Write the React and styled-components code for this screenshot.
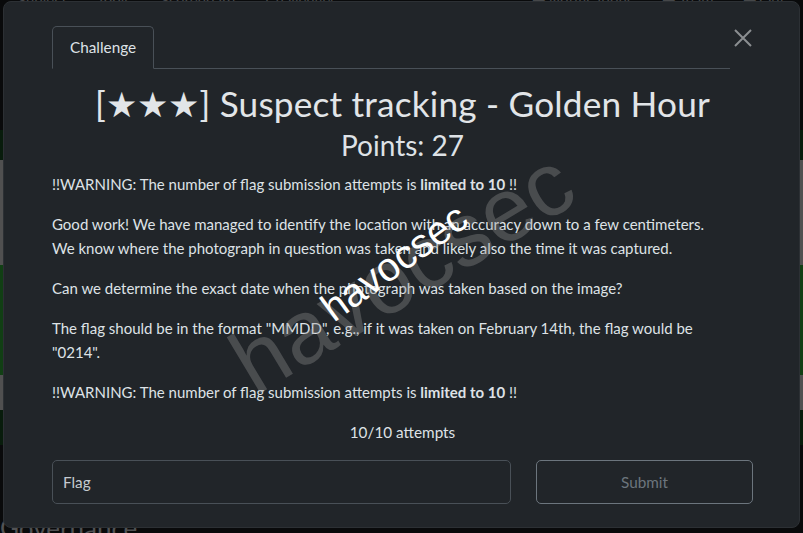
import React from 'react'
import styled, { createGlobalStyle } from 'styled-components'

const GlobalStyle = createGlobalStyle`
  html, body {
    margin: 0;
    padding: 0;
    background: #0b0c0d;
    font-family: Lato, "Open Sans", sans-serif;
    overflow: hidden;
  }
`

const Page = styled.div`
  position: relative;
  width: 803px;
  height: 533px;
  overflow: hidden;
  display: flex;
  flex-direction: column;
  background: #0f1011;
`

const Nav = styled.div`
  height: 4px;
  overflow: hidden;
  display: flex;
  align-items: flex-end;
  justify-content: space-between;
  padding: 0 18px;
  color: #6a6d70;
  font-size: 15px;
`

const NavGroup = styled.div`
  display: flex;
  gap: 30px;
  line-height: 10px;
  height: 10px;
  margin-bottom: -1px;
`

const Band = styled.div`
  height: ${(p) => p.h}px;
  background: ${(p) => p.bg};
`

const Heading = styled.div`
  margin-top: auto;
  height: 16px;
  font-size: 26px;
  line-height: 22px;
  color: #7d7f82;
`

const Backdrop = styled.div`
  position: absolute;
  inset: 0;
  background: rgba(0, 0, 0, 0.35);
`

const Modal = styled.div`
  position: absolute;
  left: 3px;
  top: 1px;
  width: 797px;
  height: 527px;
  box-sizing: border-box;
  background: #212529;
  border: 1px solid #2c3034;
  border-radius: 8px;
  padding: 24px 46px 0 48px;
  display: flex;
  flex-direction: column;
  color: #dee2e6;
  overflow: hidden;
`

const Header = styled.div`
  display: flex;
  align-items: flex-start;
`

const Tabs = styled.div`
  flex: 1;
  display: flex;
  border-bottom: 1px solid #495057;
  margin-right: 2px;
`

const Tab = styled.div`
  margin-bottom: -1px;
  padding: 0 17px;
  height: 41px;
  line-height: 41px;
  font-size: 15.3px;
  color: #dee2e6;
  background: #212529;
  border: 1px solid #495057;
  border-bottom-color: #212529;
  border-radius: 5px 5px 0 0;
`

const Close = styled.div`
  width: 21px;
  height: 22px;
  margin-top: 1px;
  display: flex;
  align-items: center;
  justify-content: center;
`

const Title = styled.h3`
  margin: 14px 0 0;
  text-align: center;
  font-weight: 400;
  font-size: 35.2px;
  line-height: 40px;
  letter-spacing: 0.2px;
  color: #e2e5e8;
`

const Points = styled.h4`
  margin: 5px 0 10px;
  text-align: center;
  font-weight: 400;
  font-size: 28px;
  line-height: 34px;
`

const Body = styled.div`
  max-width: 670px;
  font-size: 15px;
  line-height: 24px;

  p {
    margin: 0 0 16px;
  }
`

const Attempts = styled.div`
  text-align: center;
  font-size: 15.3px;
  line-height: 24px;
`

const Form = styled.div`
  display: flex;
  gap: 25px;
  margin-top: 16px;
`

const Input = styled.input`
  flex: 0 0 459px;
  height: 44px;
  box-sizing: border-box;
  padding: 0 10px;
  background: #212529;
  border: 1px solid #495057;
  border-radius: 5px;
  font-family: Lato, sans-serif;
  font-size: 15.3px;
  color: #dee2e6;
  outline: none;

  &::placeholder {
    color: #c5cad0;
  }
`

const Submit = styled.button`
  flex: 1;
  height: 44px;
  background: transparent;
  border: 1px solid #6c757d;
  border-radius: 5px;
  font-family: Lato, sans-serif;
  font-size: 15.3px;
  color: #6c757d;
`

const Watermark = styled.div`
  position: absolute;
  left: ${(p) => p.x}px;
  top: ${(p) => p.y}px;
  transform: translate(-50%, -50%) rotate(${(p) => p.rot}deg);
  font-family: "Liberation Sans", Arial, sans-serif;
  font-size: ${(p) => p.size}px;
  color: ${(p) => p.color};
  white-space: nowrap;
  pointer-events: none;
  line-height: 1;
`

const bands = [
  { h: 126, bg: '#0f1011' },
  { h: 30, bg: '#0d2c13' },
  { h: 105, bg: '#7c7c7c' },
  { h: 110, bg: '#1b6220' },
  { h: 35, bg: '#7c7c7c' },
  { h: 35, bg: '#0d2c13' },
  { h: 15, bg: '#0f1011' },
]

export default function App() {
  return (
    <>
      <GlobalStyle />
      <Page>
        <Nav>
          <NavGroup>
            <span>Subject</span>
            <span>Tools</span>
            <span>Scoreboard</span>
            <span>Challenges</span>
          </NavGroup>
          <NavGroup>
            <span>▆ Notifications</span>
            <span>▆ Team</span>
            <span>▆ Out</span>
          </NavGroup>
        </Nav>
        {bands.map((b, i) => (
          <Band key={i} h={b.h} bg={b.bg} />
        ))}
        <Heading>Governance</Heading>
        <Backdrop />
        <Modal>
          <Header>
            <Tabs>
              <Tab>Challenge</Tab>
            </Tabs>
            <Close>
              <svg width="18" height="18" viewBox="0 0 18 18">
                <path d="M1 1L17 17M17 1L1 17" stroke="#8b8e91" strokeWidth="2" />
              </svg>
            </Close>
          </Header>
          <Title>[★★★] Suspect tracking - Golden Hour</Title>
          <Points>Points: 27</Points>
          <Body>
            <p>!!WARNING: The number of flag submission attempts is <b>limited to 10</b> !!</p>
            <p>
              Good work! We have managed to identify the location with an accuracy down to a few centimeters.
              We know where the photograph in question was taken and likely also the time it was captured.
            </p>
            <p>Can we determine the exact date when the photograph was taken based on the image?</p>
            <p>
              The flag should be in the format "MMDD", e.g., if it was taken on February 14th, the flag would be
              "0214".
            </p>
            <p>!!WARNING: The number of flag submission attempts is <b>limited to 10</b> !!</p>
          </Body>
          <Attempts>10/10 attempts</Attempts>
          <Form>
            <Input placeholder="Flag" />
            <Submit disabled>Submit</Submit>
          </Form>
        </Modal>
        <Watermark x={402} y={272} rot={-31} size={90} color="rgba(150, 150, 150, 0.35)">
          havocsec
        </Watermark>
        <Watermark x={394} y={262} rot={-36} size={40} color="#ffffff">
          havocsec
        </Watermark>
      </Page>
    </>
  )
}
